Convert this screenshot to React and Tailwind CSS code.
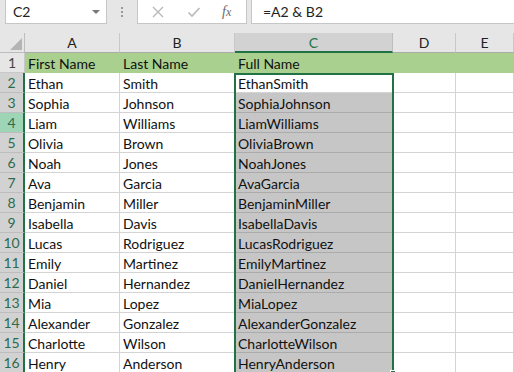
import { useState } from "react";

const people = [
  ["Ethan", "Smith"],
  ["Sophia", "Johnson"],
  ["Liam", "Williams"],
  ["Olivia", "Brown"],
  ["Noah", "Jones"],
  ["Ava", "Garcia"],
  ["Benjamin", "Miller"],
  ["Isabella", "Davis"],
  ["Lucas", "Rodriguez"],
  ["Emily", "Martinez"],
  ["Daniel", "Hernandez"],
  ["Mia", "Lopez"],
  ["Alexander", "Gonzalez"],
  ["Charlotte", "Wilson"],
  ["Henry", "Anderson"],
];

const font = { fontFamily: "Lato, 'Open Sans', sans-serif" };

function FormulaBar() {
  return (
    <div className="flex h-[33px] bg-[#e6e6e6] items-start">
      <div className="ml-[5px] w-[102px] h-[24px] bg-white border border-t-0 border-[#c6c6c6] flex items-center pl-[7px] pr-[6px] text-[14px] text-[#222]">
        <span className="flex-1">C2</span>
        <span className="w-0 h-0 border-l-[4px] border-r-[4px] border-t-[4px] border-l-transparent border-r-transparent border-t-[#777]" />
      </div>
      <div className="w-[30px] h-[24px] flex flex-col items-center justify-center gap-[2px]">
        <span className="w-[2px] h-[2px] bg-[#9a9a9a]" />
        <span className="w-[2px] h-[2px] bg-[#9a9a9a]" />
        <span className="w-[2px] h-[2px] bg-[#9a9a9a]" />
      </div>
      <div className="w-[110px] h-[24px] bg-white border border-t-0 border-[#c6c6c6] flex items-center">
        <svg width="14" height="14" viewBox="0 0 14 14" className="ml-[13px]">
          <path d="M2 2 L12 12 M12 2 L2 12" stroke="#b9b9b9" strokeWidth="1.4" fill="none" />
        </svg>
        <svg width="14" height="14" viewBox="0 0 14 14" className="ml-[22px]">
          <path d="M1.5 7.5 L5 11 L12.5 3" stroke="#b9b9b9" strokeWidth="1.6" fill="none" />
        </svg>
        <span className="ml-[21px] text-[14px] italic text-[#6a6a6a]" style={{ fontFamily: "'Liberation Serif', serif" }}>
          f<span className="text-[12px]">x</span>
        </span>
      </div>
      <div className="ml-[4px] flex-1 h-[24px] bg-white border border-t-0 border-r-0 border-[#c6c6c6] flex items-center pl-[11px] text-[14px] text-[#222]">
        =A2 &amp; B2
      </div>
    </div>
  );
}

function Cell({ children, className = "" }) {
  return (
    <div className={`h-[20px] border-r border-b border-[#d4d4d4] pl-[3px] pt-[1px] leading-[20px] whitespace-nowrap overflow-hidden text-[14px] text-[#111] ${className}`}>
      {children}
    </div>
  );
}

export default function App() {
  const [active] = useState("C2");
  const cols = ["A", "B", "C", "D", "E"];
  const green = "bg-[#a9d08e] border-r-[#a9d08e] border-b-[#a9d08e]";

  return (
    <div className="w-[514px] h-[372px] overflow-hidden bg-white" style={font}>
      <FormulaBar />
      <div className="relative grid grid-cols-[25px_95px_115px_158px_63px_1fr]">
        <div className="h-[20px] bg-[#e6e6e6] border-r border-b border-[#bdbdbd] relative">
          <span
            className="absolute right-[2px] bottom-[2px] w-0 h-0"
            style={{ borderBottom: "12px solid #b4b4b4", borderLeft: "12px solid transparent" }}
          />
        </div>
        {cols.map((c) => (
          <div
            key={c}
            className={`h-[20px] flex items-center justify-center text-[14px] border-r ${
              c === "C"
                ? "bg-[#d2d2d2] text-[#217346] border-b-2 border-b-[#217346] border-r-[#bdbdbd]"
                : "bg-[#e6e6e6] text-[#222] border-b border-[#ababab] border-r-[#c8c8c8]"
            }`}
          >
            {c}
          </div>
        ))}

        <div className="h-[20px] bg-[#e6e6e6] border-r border-b border-[#c8c8c8] text-center leading-[20px] text-[14px] text-[#444]">
          1
        </div>
        <Cell className={green}>First Name</Cell>
        <Cell className={green}>Last Name</Cell>
        <Cell className={green}>Full Name</Cell>
        <Cell className={green} />
        <Cell className={green} />

        {people.map(([first, last], i) => {
          const row = i + 2;
          return [
            <div
              key={`h${row}`}
              className={`h-[20px] border-b border-[#bdbdbd] border-r-2 border-r-[#217346] text-center leading-[20px] text-[14px] text-[#2e6b4c] ${
                row === 4 ? "bg-[#9fd5b7]" : "bg-[#d2d2d2]"
              }`}
            >
              {row}
            </div>,
            <Cell key={`a${row}`}>{first}</Cell>,
            <Cell key={`b${row}`}>{last}</Cell>,
            <Cell key={`c${row}`} className={`C${row}` === active ? "" : "bg-[#c6c6c6] border-b-[#ababab] border-r-0"}>
              {first + last}
            </Cell>,
            <Cell key={`d${row}`} />,
            <Cell key={`e${row}`} />,
          ];
        })}

        <div className="absolute left-[234px] top-[40px] w-[160px] h-[301px] border-2 border-[#217346] pointer-events-none">
          <span className="absolute -right-[4px] -bottom-[4px] w-[6px] h-[6px] bg-[#217346] border border-white" />
        </div>
      </div>
    </div>
  );
}
